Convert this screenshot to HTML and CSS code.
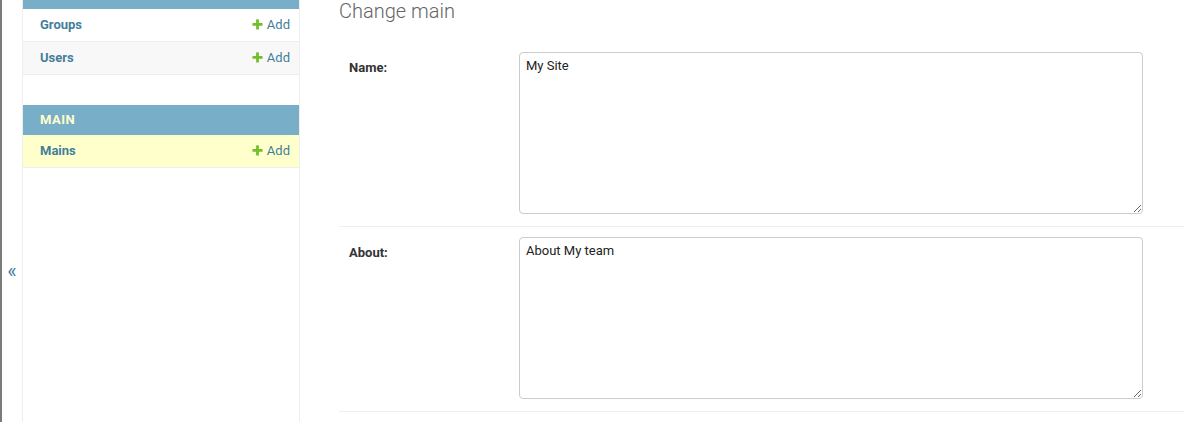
FILE: index.html
```html
<!DOCTYPE html>
<html lang="en">
<head>
<meta charset="utf-8">
<title>Change main</title>
<link rel="stylesheet" href="styles.css">
</head>
<body>
<div class="page">
  <div class="edge"></div>
  <button class="toggle" type="button" aria-label="Toggle navigation">«</button>
  <nav class="sidebar">
    <div class="module">
      <div class="caption caption-cut"></div>
      <div class="row row1"><a class="model" href="#">Groups</a><a class="addlink" href="#"><svg class="plus" viewBox="0 0 1792 1792" width="13" height="13"><path fill="#70bf2b" d="M1600 796v192q0 40-28 68t-68 28h-416v416q0 40-28 68t-68 28h-192q-40 0-68-28t-28-68v-416h-416q-40 0-68-28t-28-68v-192q0-40 28-68t68-28h416v-416q0-40 28-68t68-28h192q40 0 68 28t28 68v416h416q40 0 68 28t28 68z"/></svg>Add</a></div>
      <div class="row row2"><a class="model" href="#">Users</a><a class="addlink" href="#"><svg class="plus" viewBox="0 0 1792 1792" width="13" height="13"><path fill="#70bf2b" d="M1600 796v192q0 40-28 68t-68 28h-416v416q0 40-28 68t-68 28h-192q-40 0-68-28t-28-68v-416h-416q-40 0-68-28t-28-68v-192q0-40 28-68t68-28h416v-416q0-40 28-68t68-28h192q40 0 68 28t28 68v416h416q40 0 68 28t28 68z"/></svg>Add</a></div>
    </div>
    <div class="module current-app">
      <div class="caption"><a class="section" href="#">Main</a></div>
      <div class="row current-model"><a class="model" href="#">Mains</a><a class="addlink" href="#"><svg class="plus" viewBox="0 0 1792 1792" width="13" height="13"><path fill="#70bf2b" d="M1600 796v192q0 40-28 68t-68 28h-416v416q0 40-28 68t-68 28h-192q-40 0-68-28t-28-68v-416h-416q-40 0-68-28t-28-68v-192q0-40 28-68t68-28h416v-416q0-40 28-68t68-28h192q40 0 68 28t28 68v416h416q40 0 68 28t28 68z"/></svg>Add</a></div>
    </div>
  </nav>
  <main class="content">
    <h1 class="title">Change main</h1>
    <form class="form">
      <div class="form-row">
        <label class="required" for="id_name">Name:</label>
        <textarea id="id_name" class="field">My Site</textarea>
      </div>
      <div class="form-row">
        <label class="required" for="id_about">About:</label>
        <textarea id="id_about" class="field">About My team</textarea>
      </div>
    </form>
  </main>
</div>
</body>
</html>
```

FILE: styles.css
```css
html, body {
  margin: 0;
  padding: 0;
  height: 100%;
  overflow: hidden;
  background: #fff;
}

body {
  font-family: Roboto, "Liberation Sans", sans-serif;
  font-size: 14px;
  color: #333;
}

.page {
  display: flex;
  height: 422px;
  overflow: hidden;
}

.edge {
  flex: 0 0 2px;
  background: #7a7a7a;
}

.toggle {
  box-sizing: content-box;
  flex: 0 0 20px;
  width: 20px;
  margin: 0;
  padding: 261px 0 0 0;
  border: 0;
  border-right: 1px solid #eee;
  background: #fff;
  color: #447e9b;
  font-family: Roboto, "Liberation Sans", sans-serif;
  font-size: 20px;
  line-height: 20px;
  display: flex;
  justify-content: center;
  align-items: flex-start;
  cursor: pointer;
}

.sidebar {
  flex: 0 0 276px;
  width: 276px;
  border-right: 1px solid #eee;
  font-size: 13px;
}

.module {
  margin-bottom: 30px;
}

.caption {
  background: #79aec8;
  padding: 8px 17px;
  line-height: 14px;
  text-transform: uppercase;
  letter-spacing: 0.5px;
}

.caption-cut {
  height: 9px;
  padding: 0;
}

.section {
  color: #ffc;
  font-weight: bold;
  text-decoration: none;
}

.row {
  display: flex;
  justify-content: space-between;
  align-items: center;
  padding: 8px 9px 8px 17px;
  line-height: 16px;
  border-bottom: 1px solid #eee;
}

.row1 { background: #fff; }
.row2 { background: #f8f8f8; }
.current-model { background: #ffc; }

.model {
  color: #447e9b;
  font-weight: bold;
  text-decoration: none;
}

.addlink {
  position: relative;
  padding-left: 16px;
  color: #447e9b;
  text-decoration: none;
}

.plus {
  position: absolute;
  left: 0;
  top: 1px;
}

.content {
  flex: 1 1 auto;
  min-width: 0;
  padding: 0 0 0 39px;
}

.title {
  margin: -1px 0 19px 0;
  font-size: 20px;
  line-height: 24px;
  font-weight: 300;
  color: #666;
}

.form {
  margin: 0;
}

.form-row {
  display: flex;
  align-items: flex-start;
  padding: 10px 0 12px 10px;
  border-bottom: 1px solid #eee;
}

.form-row label {
  flex: 0 0 160px;
  width: 160px;
  padding: 8px 10px 0 0;
  font-size: 13px;
  line-height: 16px;
  color: #333;
}

.form-row label.required {
  font-weight: bold;
}

.field {
  box-sizing: border-box;
  width: 624px;
  height: 162px;
  margin: 0;
  padding: 5px 6px;
  border: 1px solid #ccc;
  border-radius: 4px;
  font-family: Roboto, "Liberation Sans", sans-serif;
  font-size: 13px;
  color: #222;
  background: #fff;
  resize: both;
  outline: none;
}
```
